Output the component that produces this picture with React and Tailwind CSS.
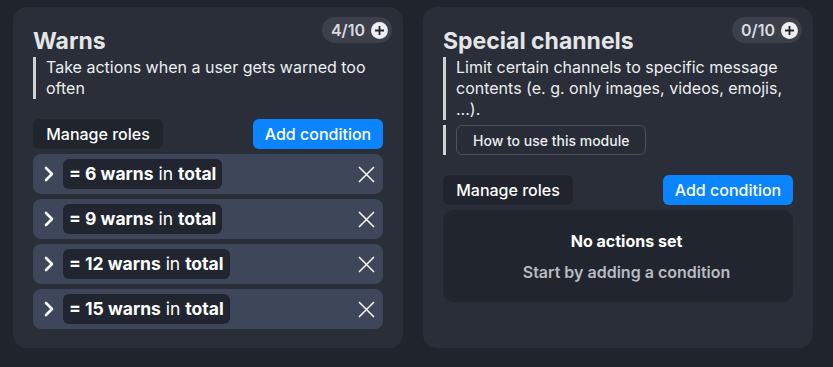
import React from "react";

function Badge({ count }) {
  return (
    <div className="absolute top-[10px] right-[11px] flex h-[26px] items-center gap-[6px] rounded-full bg-[#3b404a] pl-[9px] pr-[4px] text-[16px] font-semibold text-[#d9dbe0]">
      <span>{count}/10</span>
      <span className="flex h-[17px] w-[17px] items-center justify-center rounded-full bg-[#eceef1]">
        <svg width="11" height="11" viewBox="0 0 11 11">
          <path d="M5.5 1v9M1 5.5h9" stroke="#20242c" strokeWidth="1.8" />
        </svg>
      </span>
    </div>
  );
}

function Chevron() {
  return (
    <svg width="12" height="16" viewBox="0 0 12 16" className="shrink-0">
      <path d="M3 2l6 6-6 6" stroke="#ffffff" strokeWidth="2.6" fill="none" strokeLinecap="round" strokeLinejoin="round" />
    </svg>
  );
}

function XIcon() {
  return (
    <svg width="17" height="17" viewBox="0 0 17 17">
      <path d="M1 1l15 15M16 1L1 16" stroke="#ffffff" strokeWidth="1.5" />
    </svg>
  );
}

function Buttons() {
  return (
    <div className="flex items-center justify-between">
      <button className="h-[30px] w-[130px] rounded-[6px] bg-[#20242c] text-[16px] font-medium text-white">
        Manage roles
      </button>
      <button className="h-[30px] w-[130px] rounded-[6px] bg-[#0a84ff] text-[16px] font-medium text-white">
        Add condition
      </button>
    </div>
  );
}

function Row({ n }) {
  return (
    <div className="flex h-[40px] items-center rounded-[8px] bg-[#3d4759] pl-[10px] pr-[8px]">
      <Chevron />
      <div className="ml-[8px] flex h-[30px] items-center rounded-[6px] bg-[#20252f] px-[6px] text-[17.5px] text-white">
        <span className="font-bold">=&nbsp;{n} warns</span>
        <span className="font-normal">&nbsp;in&nbsp;</span>
        <span className="font-bold">total</span>
      </div>
      <div className="ml-auto flex items-center">
        <XIcon />
      </div>
    </div>
  );
}

export default function App() {
  return (
    <div
      className="min-h-[367px] w-[833px] bg-[#20242c] pl-[13px] pt-[7px]"
      style={{ fontFamily: "Inter, 'Noto Sans', sans-serif" }}
    >
      <div className="flex gap-[20px] items-stretch">
        <div className="relative w-[390px] rounded-[14px] bg-[#292e38] px-[20px] pt-[20px] pb-[19px]">
          <Badge count={4} />
          <h2 className="text-[23px] font-bold leading-[28px] text-[#e4e5e8]">Warns</h2>
          <div className="mt-[2px] border-l-[3px] border-[#cfd1d5] pl-[10px] text-[16px] leading-[21px] text-[#eceef0]">
            Take actions when a user gets warned too often
          </div>
          <div className="mt-[20px]">
            <Buttons />
          </div>
          <div className="mt-[5px] flex flex-col gap-[5px]">
            <Row n={6} />
            <Row n={9} />
            <Row n={12} />
            <Row n={15} />
          </div>
        </div>

        <div className="relative w-[390px] rounded-[14px] bg-[#292e38] px-[20px] pt-[20px] pb-[19px]">
          <Badge count={0} />
          <h2 className="text-[23px] font-bold leading-[28px] text-[#e4e5e8]">Special channels</h2>
          <div className="mt-[2px] border-l-[3px] border-[#cfd1d5] pl-[10px] text-[16px] leading-[21px] text-[#eceef0]">
            Limit certain channels to specific message contents (e. g. only images, videos, emojis, ...).
          </div>
          <div className="mt-[5px] border-l-[3px] border-[#cfd1d5] pl-[10px]">
            <button className="h-[30px] rounded-[6px] border border-[#4d535e] bg-[#272c36] px-[16px] text-[14px] font-medium text-[#eceef0]">
              How to use this module
            </button>
          </div>
          <div className="mt-[20px]">
            <Buttons />
          </div>
          <div className="mt-[5px] flex h-[92px] flex-col items-center justify-center rounded-[10px] bg-[#21262e] pl-[17px]">
            <div className="text-[16px] font-bold leading-[20px] text-white">No actions set</div>
            <div className="mt-[11px] text-[16px] font-semibold leading-[20px] text-[#b8bbc1]">
              Start by adding a condition
            </div>
          </div>
        </div>
      </div>
    </div>
  );
}
